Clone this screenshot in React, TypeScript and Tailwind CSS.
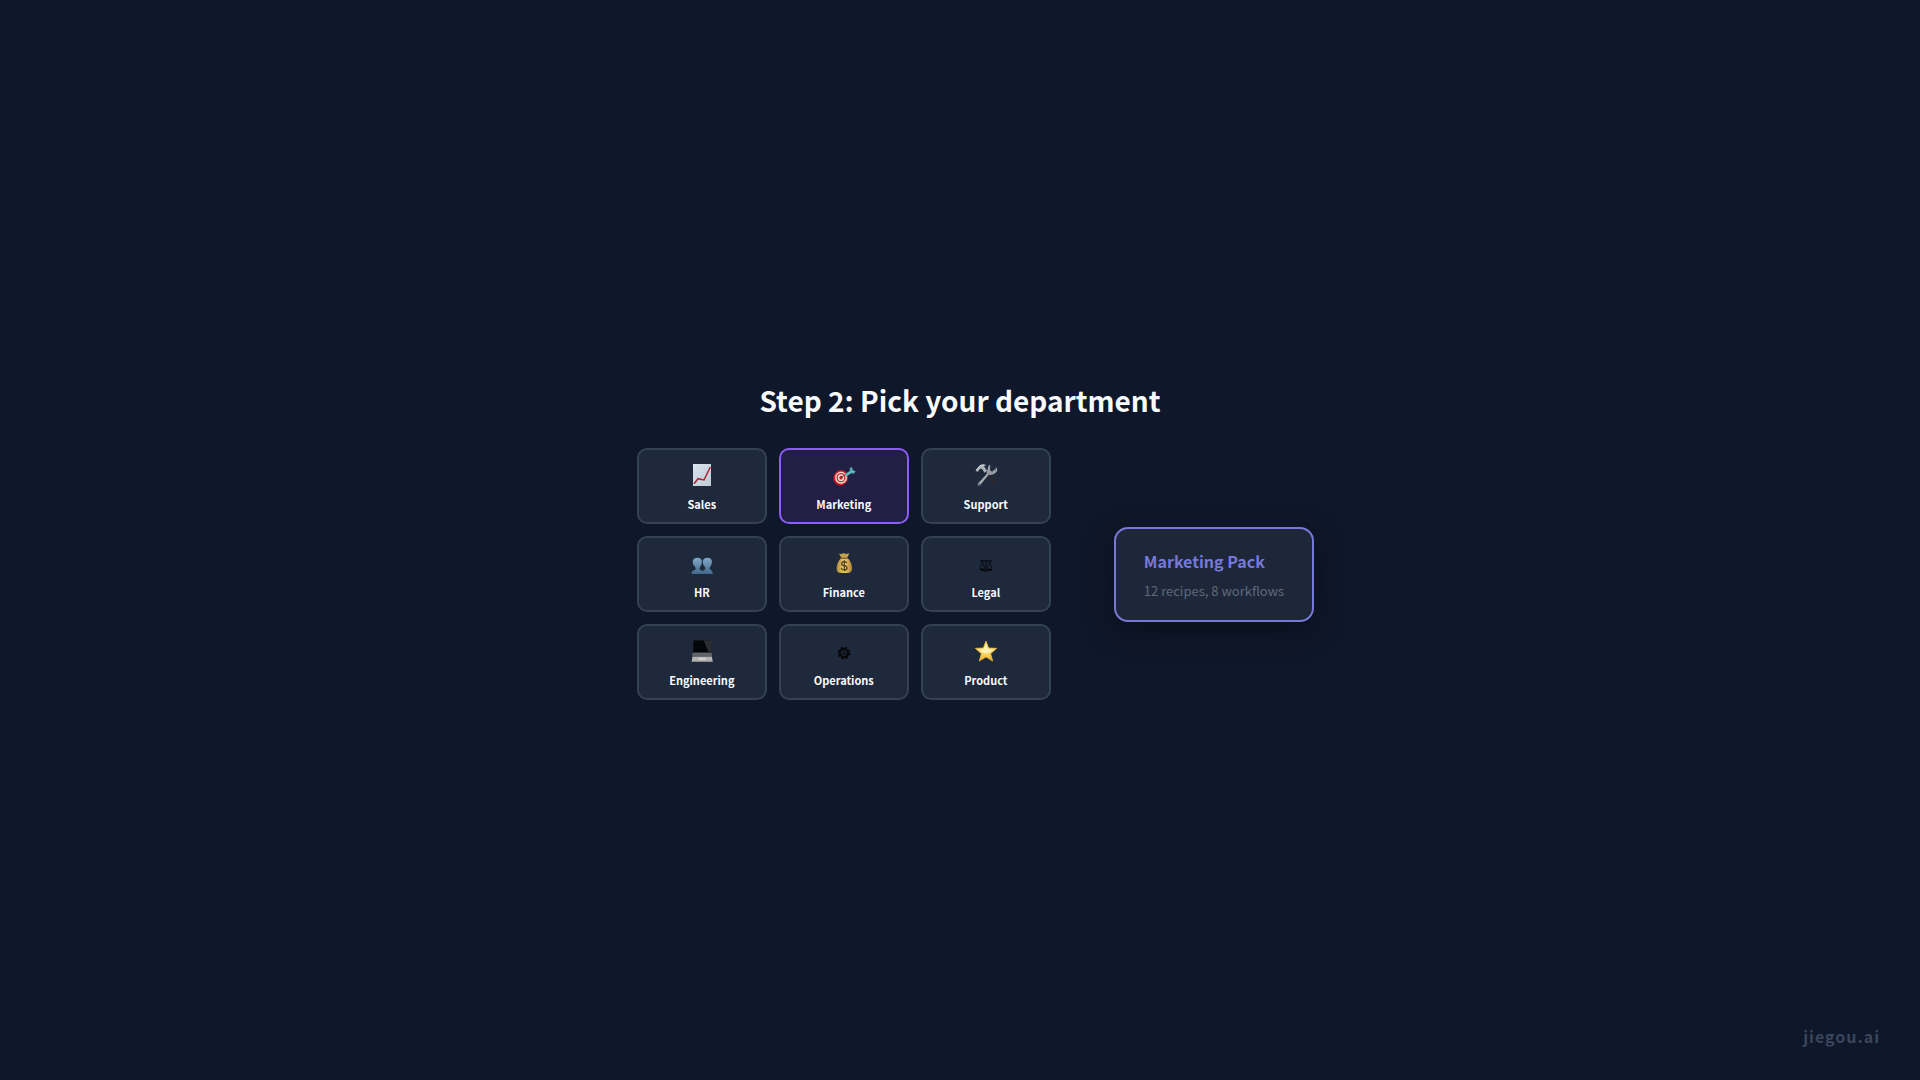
import type { ReactNode } from 'react';

type Department = { name: string; icon: ReactNode; selected?: boolean };

function Icon({ children }: { children: ReactNode }) {
  return (
    <svg viewBox="0 0 72 72" className="size-6" aria-hidden="true">
      {children}
    </svg>
  );
}

const chart = (
  <Icon>
    <defs>
      <linearGradient id="paper" x1="0" y1="0" x2="1" y2="1">
        <stop offset="0" stopColor="#dbe6ef" />
        <stop offset="1" stopColor="#bccbd6" />
      </linearGradient>
    </defs>
    <rect x="9" y="3" width="54" height="66" fill="url(#paper)" />
    <path d="M9 16H63M9 29H63M9 42H63M9 55H63M22 3V69M36 3V69M49 3V69" stroke="#c3d2dd" strokeWidth="1" />
    <path d="M12 62L24 47L42 51L61 12" fill="none" stroke="#b3222f" strokeWidth="4.5" />
  </Icon>
);

const target = (
  <Icon>
    <ellipse cx="24" cy="46" rx="20" ry="22" fill="#a3161b" />
    <ellipse cx="27" cy="44" rx="21" ry="22" fill="#d3292c" />
    <ellipse cx="27" cy="44" rx="17.5" ry="18" fill="#f2ddd8" />
    <ellipse cx="27" cy="44" rx="13.5" ry="14" fill="#c9262b" />
    <ellipse cx="27" cy="44" rx="9.5" ry="10" fill="#f2ddd8" />
    <ellipse cx="27" cy="44" rx="5" ry="5.5" fill="#b91f26" />
    <path d="M28 43L45 32" stroke="#5d3b45" strokeWidth="3" />
    <path d="M38 34L54 23L53 15L60 12L62 21L71 25L66 32L58 31L44 40Z" fill="#54a9b3" />
    <path d="M42 36L63 23" stroke="#90d2d5" strokeWidth="2" />
  </Icon>
);

const tools = (
  <Icon>
    <path d="M34 29L38 26L68 62L62 69Z" fill="#2c292f" />
    <path d="M6 20L16 8Q25 1 37 6L30 10L35 17L39 23L32 29L24 18L18 17L12 26L5 24Z" fill="#aeb2b8" />
    <path d="M7 20L17 10L29 6" fill="none" stroke="#d9dce0" strokeWidth="3" />
    <path d="M12 61L38 33Q36 22 44 14L49 10L48 21L54 26L64 17Q68 27 60 33Q52 37 44 35L20 65Q16 70 12 67Q9 64 12 61Z" fill="#94999f" />
    <path d="M17 62L40 35" stroke="#c9cdd2" strokeWidth="2" />
    <circle cx="16" cy="64" r="2.5" fill="#454c58" />
    <path d="M48 6L43 14L45 23M66 14L68 23L61 30" fill="none" stroke="#a4a9b0" strokeWidth="3.5" />
  </Icon>
);

const people = (
  <Icon>
    <defs>
      <linearGradient id="bust" x1="0" y1="0" x2="0" y2="1">
        <stop offset="0" stopColor="#83a9c7" />
        <stop offset="1" stopColor="#41688a" />
      </linearGradient>
    </defs>
    <path d="M35 69V63Q36 59 43 57L46 54V50Q38 43 38 31Q40 20 52 20Q65 20 66 32Q65 43 59 50V55Q67 58 68 65V69Z" fill="url(#bust)" />
    <path d="M5 69V64Q6 59 14 57L17 55V50Q8 43 8 31Q10 20 22 20Q35 20 36 32Q35 43 29 50V55L32 57Q38 60 38 65V69Z" fill="url(#bust)" />
  </Icon>
);

const money = (
  <Icon>
    <defs>
      <linearGradient id="bag" x1="0" y1="0" x2="1" y2="0">
        <stop offset="0" stopColor="#b68b3c" />
        <stop offset="0.5" stopColor="#e9cb70" />
        <stop offset="1" stopColor="#b28535" />
      </linearGradient>
    </defs>
    <path d="M21 8L29 9L35 6L42 9L52 7L46 20L28 20Z" fill="#c69e4c" />
    <path d="M28 20H46Q61 34 60 54Q59 66 45 66H28Q14 66 14 53Q14 34 28 20Z" fill="url(#bag)" />
    <path d="M26 21Q37 25 48 21" fill="none" stroke="#765423" strokeWidth="3" />
    <path d="M44 36Q43 32 36 32Q29 32 29 38Q29 43 37 44Q45 45 45 51Q45 57 37 57Q29 57 28 51M37 28V61" fill="none" stroke="#49391f" strokeWidth="3.5" />
  </Icon>
);

const scales = (
  <Icon>
    <path d="M18 29.5H54M36 25V58M28 59.5H44" fill="none" stroke="#05070b" strokeWidth="3" />
    <path d="M25 30L18 53M25 30L32 53M47 30L40 53M47 30L54 53" fill="none" stroke="#05070b" strokeWidth="2.5" />
    <path d="M16 53H34Q31 60 25 60Q19 60 16 53ZM38 53H56Q53 60 47 60Q41 60 38 53Z" fill="#05070b" />
  </Icon>
);

const laptop = (
  <Icon>
    <path d="M9 3H64L65 42H8Z" fill="#3a3d42" />
    <path d="M10 4H63L64 40H9Z" fill="#050609" />
    <path d="M41 4H63L64 38H55Z" fill="#2b2e33" />
    <path d="M8 42H65L66 55H7Z" fill="#6a6d71" />
    <path d="M10 45H63M10 49H63" stroke="#55585d" strokeWidth="2" />
    <path d="M7 54H66L68 68H5Z" fill="#b4b4b2" />
    <path d="M26 56H47L48 63H25Z" fill="#cfcfcc" />
    <path d="M5 67H68" stroke="#898b8d" strokeWidth="2" />
  </Icon>
);

const gear = (
  <Icon>
    <circle cx="36" cy="42" r="12" fill="none" stroke="#05070b" strokeWidth="6" />
    <circle cx="36" cy="42" r="16.5" fill="none" stroke="#05070b" strokeWidth="5" strokeDasharray="7.5 5.46" />
    <circle cx="36" cy="42" r="4" fill="none" stroke="#05070b" strokeWidth="2.5" />
    <path d="M36 30V38M26 48L33 44M46 48L39 44" stroke="#05070b" strokeWidth="2" />
  </Icon>
);

const star = (
  <Icon>
    <defs>
      <linearGradient id="gold" x1="0" y1="0" x2="0" y2="1">
        <stop offset="0" stopColor="#fff7b8" />
        <stop offset="0.5" stopColor="#fbe58a" />
        <stop offset="1" stopColor="#f0ad1b" />
      </linearGradient>
    </defs>
    <path d="M36 6L44 27L68 28L50 44L56 66L36 54L16 66L22 44L4 28L28 27Z" fill="url(#gold)" stroke="#e8b030" strokeWidth="2.5" strokeLinejoin="round" />
    <path d="M36 18L40 32L54 33L43 41L36 43L28 41L18 33L32 32Z" fill="#fffbe0" opacity="0.6" />
  </Icon>
);

const departments: Department[] = [
  { name: 'Sales', icon: chart },
  { name: 'Marketing', icon: target, selected: true },
  { name: 'Support', icon: tools },
  { name: 'HR', icon: people },
  { name: 'Finance', icon: money },
  { name: 'Legal', icon: scales },
  { name: 'Engineering', icon: laptop },
  { name: 'Operations', icon: gear },
  { name: 'Product', icon: star },
];

function DepartmentCard({ name, icon, selected = false }: Department) {
  return (
    <button
      type="button"
      aria-pressed={selected}
      className={`flex flex-col items-center gap-[7px] rounded-[10px] border-2 px-4 pt-[13px] pb-2 ${
        selected ? 'border-[#8b5cf6] bg-[#221f45]' : 'border-[#334155] bg-[#1e293b]'
      }`}
    >
      {icon}
      <span className="text-[11px] leading-5 font-bold text-slate-50">{name}</span>
    </button>
  );
}

export default function App() {
  return (
    <div className="relative flex min-h-screen flex-col items-center justify-center bg-[#0f172a] font-['Noto_Sans_CJK_SC',sans-serif]">
      <h1 className="mb-7 text-[28px] leading-10 font-bold text-slate-50">Step 2: Pick your department</h1>
      <main className="flex items-center gap-[63px] pl-[31px]">
        <div className="grid grid-cols-[repeat(3,130px)] gap-3">
          {departments.map((department) => (
            <DepartmentCard key={department.name} {...department} />
          ))}
        </div>
        <section className="flex flex-col gap-2 rounded-[14px] border-2 border-[#7679d8] bg-[#1d2739] px-7 pt-5 pb-[19px] shadow-[0_8px_32px_rgba(0,0,0,0.4)]">
          <h2 className="text-[16px] leading-6 font-bold text-[#7679d8]">Marketing Pack</h2>
          <p className="text-[13px] leading-5 text-[#5f697b]">12 recipes, 8 workflows</p>
        </section>
      </main>
      <footer className="absolute right-10 bottom-8 text-[16px] leading-6 font-bold tracking-[1px] text-[#3a465b]">
        jiegou.ai
      </footer>
    </div>
  );
}
